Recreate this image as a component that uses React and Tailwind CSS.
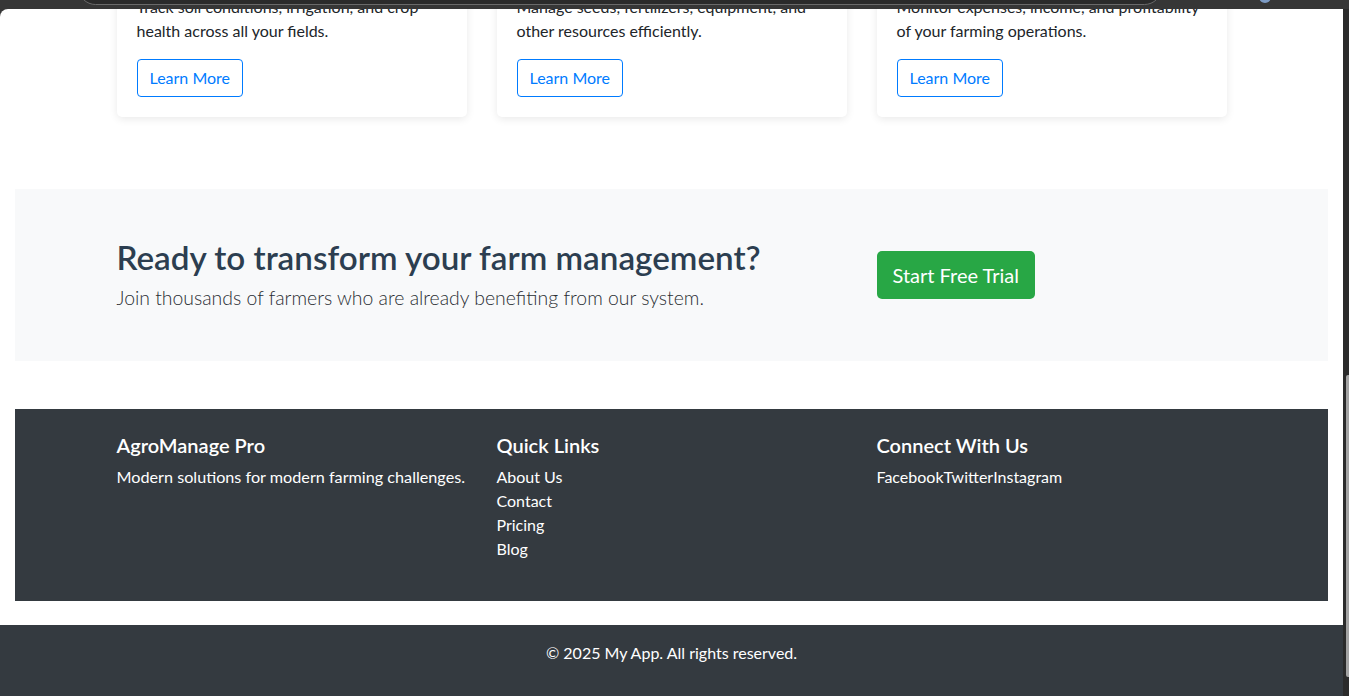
import React from "react";

const features = [
    { lines: ["Track soil conditions, irrigation, and crop", "health across all your fields."] },
    { lines: ["Manage seeds, fertilizers, equipment, and", "other resources efficiently."] },
    { lines: ["Monitor expenses, income, and profitability", "of your farming operations."] },
];

const quickLinks = ["About Us", "Contact", "Pricing", "Blog"];

const FeatureCard = ({ lines }) => (
    <div className="bg-white rounded-[5px] shadow-[0_2px_8px_rgba(0,0,0,0.09)] px-5 pb-5">
        <p className="text-[16px] leading-6 text-[#212529] mb-4">
            {lines[0]}
            <br />
            {lines[1]}
        </p>
        <button className="h-[38px] px-3 border border-[#007bff] rounded-[4px] text-[#007bff] text-[16px] leading-6">
            Learn More
        </button>
    </div>
);

const App = () => {
    return (
        <div
            className="h-[696px] w-full flex flex-col bg-[#363636] overflow-hidden"
            style={{ fontFamily: "Lato, 'Noto Sans', sans-serif" }}
        >
            {/* browser chrome strip */}
            <div className="relative h-[9px] shrink-0 overflow-hidden">
                <div className="absolute left-[78px] top-[-30px] w-[1084px] h-[35px] rounded-[18px] border border-[#6a6a6a] bg-[#2a2a2a]" />
                <div className="absolute left-[1259px] top-[-9px] w-[12px] h-[12px] rounded-full bg-[#7d9bc4]" />
            </div>

            <div className="flex flex-1 min-h-0">
                <div className="flex-1 bg-white rounded-tl-[8px] overflow-hidden flex flex-col">
                    <div className="px-[15px]">
                        {/* feature cards, scrolled partly out of view */}
                        <section className="w-[1110px] mx-auto grid grid-cols-3 gap-[30px] -mt-[14px]">
                            {features.map((f, i) => (
                                <FeatureCard key={i} lines={f.lines} />
                            ))}
                        </section>

                        {/* call to action */}
                        <section className="mt-[72px] bg-[#f8f9fa] py-12">
                            <div className="w-[1110px] mx-auto flex items-center">
                                <div className="w-[760px]">
                                    <h2 className="text-[33.2px] leading-[40px] font-semibold text-[#2c3e50] mb-[6px]">
                                        Ready to transform your farm management?
                                    </h2>
                                    <p className="text-[19.4px] leading-[30px] font-light text-[#2a2e33]">
                                        Join thousands of farmers who are already benefiting from our system.
                                    </p>
                                </div>
                                <div className="flex-1">
                                    <button className="h-[48px] px-4 bg-[#28a745] text-white text-[20px] leading-[30px] rounded-[5px]">
                                        Start Free Trial
                                    </button>
                                </div>
                            </div>
                        </section>

                        {/* footer */}
                        <footer className="mt-12 bg-[#343a40] text-white pt-6 pb-6">
                            <div className="w-[1110px] mx-auto grid grid-cols-3 gap-[30px]">
                                <div>
                                    <h5 className="text-[20px] leading-6 font-semibold mb-2">AgroManage Pro</h5>
                                    <p className="text-[16.2px] leading-6">Modern solutions for modern farming challenges.</p>
                                </div>
                                <div>
                                    <h5 className="text-[20px] leading-6 font-semibold mb-2">Quick Links</h5>
                                    <ul className="mb-4">
                                        {quickLinks.map((link) => (
                                            <li key={link} className="text-[16px] leading-6">{link}</li>
                                        ))}
                                    </ul>
                                </div>
                                <div>
                                    <h5 className="text-[20px] leading-6 font-semibold mb-2">Connect With Us</h5>
                                    <div className="flex text-[16px] leading-6">
                                        <span>Facebook</span>
                                        <span>Twitter</span>
                                        <span>Instagram</span>
                                    </div>
                                </div>
                            </div>
                        </footer>
                    </div>

                    <div className="mt-6 bg-[#343a40] text-white text-center pt-4 pb-[31px]">
                        <p className="text-[16px] leading-6">© 2025 My App. All rights reserved.</p>
                    </div>
                </div>

                {/* scrollbar */}
                <div className="w-[6px] shrink-0 bg-[#2b2b2b] flex flex-col">
                    <div className="h-[366px]" />
                    <div className="ml-[3px] w-[3px] h-[302px] rounded-l-[2px] bg-[#a3a3a3]" />
                </div>
            </div>
        </div>
    );
};

export default App;
